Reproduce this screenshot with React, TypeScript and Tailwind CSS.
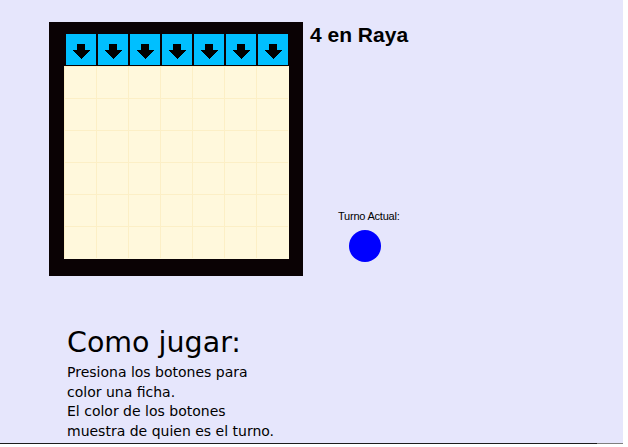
import React from "react";

const COLS = 7;
const ROWS = 6;

function DropArrow() {
	return (
		<svg width="18" height="15" viewBox="0 0 18 15" shapeRendering="crispEdges">
			<rect x="5" y="0" width="8" height="7" fill="#000" />
			<polygon points="0,6 18,6 9,15" fill="#000" />
		</svg>
	);
}

function Board() {
	return (
		<div className="bg-[#0a0204] pl-[15px] pt-[12px] pr-[14px] pb-[17px]">
			{/* Botones de columna */}
			<div className="flex h-[32px]">
				{Array.from({ length: COLS }).map((_, i) => (
					<button
						key={i}
						className="w-[30px] h-[31px] ml-[2px] bg-[#00bfff] flex justify-center pt-[10px]"
					>
						<DropArrow />
					</button>
				))}
			</div>

			{/* Tablero */}
			<div className="w-[225px] h-[193px] bg-[#fff8dc] grid grid-cols-[repeat(7,32px)] grid-rows-[repeat(6,32px)]">
				{Array.from({ length: COLS * ROWS }).map((_, i) => (
					<div key={i} className="border-l border-t border-[#fcefc6]" />
				))}
			</div>
		</div>
	);
}

export default function App() {
	return (
		<div className="bg-white w-[628px] h-[447px]">
			<div className="w-[623px] h-[444px] bg-[#e6e6fc] flex flex-col">
				<div className="flex pt-[22px] pl-[49px]">
					<Board />

					<div className="ml-[7px] flex flex-col">
						<h1 className="mt-[1px] text-[21px] leading-[24px] font-bold text-black font-['Liberation_Sans',Arial,sans-serif]">
							4 en Raya
						</h1>

						{/* Turno */}
						<div className="ml-[28px] mt-[163px] flex flex-col">
							<span className="text-[11px] leading-[13px] tracking-[-0.02em] text-black font-['Liberation_Sans',Arial,sans-serif]">
								Turno Actual:
							</span>
							<div className="ml-[11px] mt-[7px] w-[32px] h-[32px] rounded-full bg-[#0000ff]" />
						</div>
					</div>
				</div>

				{/* Instrucciones */}
				<div className="pl-[67px] mt-[50px] text-black font-['DejaVu_Sans',Verdana,sans-serif]">
					<h2 className="text-[28.5px] leading-[33px]">Como jugar:</h2>
					<p className="mt-[4px] text-[14px] leading-[19.5px]">
						Presiona los botones para
						<br />
						color una ficha.
						<br />
						El color de los botones
						<br />
						muestra de quien es el turno.
					</p>
				</div>

				<div className="mt-auto flex h-px">
					<div className="w-[597px] bg-[#1c1c1c]" />
					<div className="flex-1 bg-[#7f7f7f]" />
				</div>
			</div>
		</div>
	);
}
